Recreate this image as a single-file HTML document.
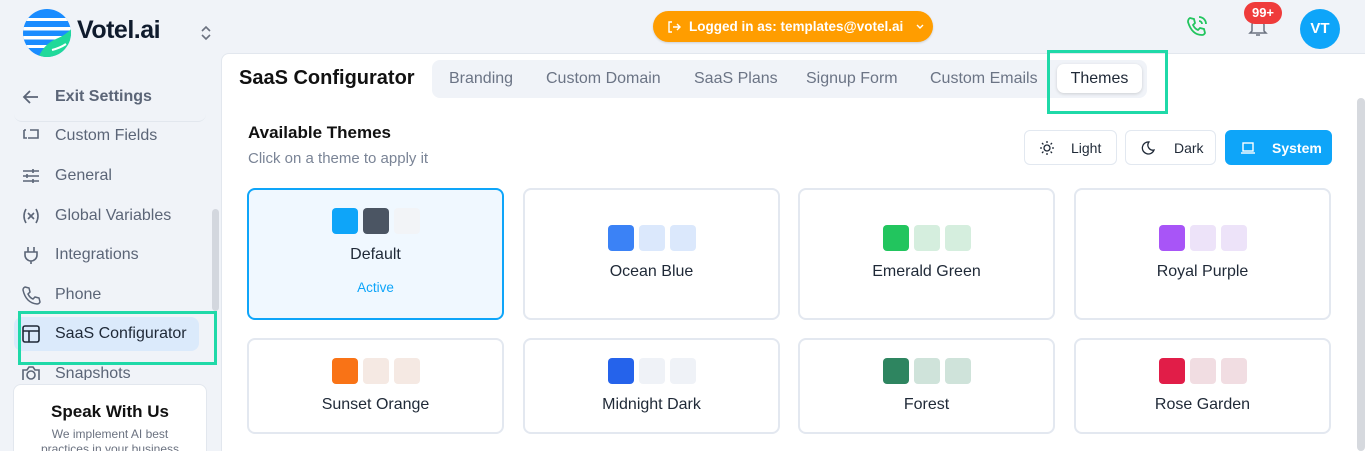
<!DOCTYPE html>
<html><head><meta charset="utf-8"><style>
*{box-sizing:border-box;margin:0;padding:0}
html,body{width:1365px;height:451px;overflow:hidden}
body{background:#f0f3f8;font-family:"Liberation Sans",sans-serif;position:relative;color:#1f2937}
.a{position:absolute}
.nav{position:absolute;left:21px;font-size:16px;color:#5b6577;display:flex;align-items:center;white-space:nowrap}
.nav svg{width:20px;height:20px;margin-right:14px;flex:none}
.card{position:absolute;width:257px;border:2px solid #e3e8f0;border-radius:8px;background:#fff;text-align:center;font-size:16px;color:#1f2937}
.sw{display:flex;justify-content:center;gap:5px;margin-bottom:12px}
.sw i{width:26px;height:26px;border-radius:4px;display:block}
.tab{position:absolute;top:70px;font-size:16px;color:#6b7485;white-space:nowrap}
.btn{position:absolute;top:130px;height:35px;border:1px solid #e2e8f0;border-radius:6px;background:#fff;font-size:14px;display:flex;align-items:center;color:#1f2937}
</style></head><body>
<svg class="a" style="left:22px;top:8px" width="50" height="50" viewBox="0 0 50 50">
<clipPath id="c"><circle cx="25" cy="25" r="24"/></clipPath>
<g clip-path="url(#c)"><rect width="50" height="50" fill="#1a8cff"/>
<rect x="0" y="10" width="50" height="3" fill="#fff"/><rect x="0" y="19" width="50" height="3.5" fill="#fff"/><rect x="0" y="28" width="50" height="3.5" fill="#fff"/><rect x="0" y="37" width="50" height="3" fill="#fff"/>
<path d="M16 50 Q22 36 34 31 Q44 27 50 20 L50 50Z" fill="#20d99a"/><path d="M30 42 Q38 40 44 36" stroke="#fff" stroke-width="2" fill="none"/></g></svg>
<div class="a" style="left:77px;top:16px;font-size:25px;font-weight:bold;color:#0f1b2d;letter-spacing:-0.5px">Votel.ai</div>
<svg class="a" style="left:200px;top:25px" width="12" height="16" viewBox="0 0 12 16"><path d="M2 6l4-4 4 4M2 10l4 4 4-4" fill="none" stroke="#6b7280" stroke-width="1.6"/></svg>
<div class="a" style="left:14px;top:74px;width:192px;height:48px;border-bottom:1px solid #e2e7ee;border-radius:0 0 8px 8px"></div>
<div class="nav" style="top:87px;color:#5b6577;font-weight:bold"><svg viewBox="0 0 20 20"><path d="M17 10H4M9 4l-6 6 6 6" fill="none" stroke="#5b6577" stroke-width="1.8"/></svg>Exit Settings</div>
<div class="nav" style="top:126px"><svg viewBox="0 0 20 20"><path d="M3 4v8h3M7 12h10V4H9M3 4h2" fill="none" stroke="#5b6577" stroke-width="1.6"/></svg>Custom Fields</div>
<div class="nav" style="top:166px"><svg viewBox="0 0 20 20"><path d="M2 5h16M2 10h16M2 15h16M12 3v4M6 8v4M12 13v4" fill="none" stroke="#5b6577" stroke-width="1.6"/></svg>General</div>
<div class="nav" style="top:206px"><svg viewBox="0 0 20 20"><path d="M5 3Q1 10 5 17M15 3Q19 10 15 17M7 7l6 6M13 7l-6 6" fill="none" stroke="#5b6577" stroke-width="1.6"/></svg>Global Variables</div>
<div class="nav" style="top:245px"><svg viewBox="0 0 20 20"><path d="M7 2v5M13 2v5M4 7h12v3a6 6 0 0 1-12 0zM10 16v3" fill="none" stroke="#5b6577" stroke-width="1.6"/></svg>Integrations</div>
<div class="nav" style="top:285px"><svg viewBox="0 0 20 20"><path d="M4 2l4 1 1 4-2 2q2 4 5 5l2-2 4 1 1 4q-1 2-3 2Q5 18 2 5q0-2 2-3z" fill="none" stroke="#5b6577" stroke-width="1.5"/></svg>Phone</div>
<div class="a" style="left:14px;top:317px;width:185px;height:34px;background:#dbeafb;border-radius:8px"></div>
<div class="nav" style="top:324px;color:#1f2937"><svg viewBox="0 0 20 20"><rect x="2" y="2" width="16" height="16" rx="2" fill="none" stroke="#1f2937" stroke-width="1.6"/><path d="M2 7h16M8 7v11" stroke="#1f2937" stroke-width="1.6"/></svg>SaaS Configurator</div>
<div class="a" style="left:21px;top:364px;height:16px;width:180px;overflow:hidden"><div class="nav" style="left:0;top:0"><svg viewBox="0 0 20 20"><circle cx="10" cy="11" r="4" fill="none" stroke="#5b6577" stroke-width="1.6"/><path d="M2 6h4l2-3h4l2 3h4v12H2z" fill="none" stroke="#5b6577" stroke-width="1.6"/></svg>Snapshots</div></div>
<div class="a" style="left:18px;top:311px;width:199px;height:54px;border:3px solid #1fd9a8"></div>
<div class="a" style="left:212px;top:209px;width:7px;height:102px;background:#d3d7de;border-radius:4px"></div>
<div class="a" style="left:13px;top:384px;width:194px;height:80px;background:#fff;border:1px solid #e2e7ee;border-radius:8px;text-align:center">
<div style="font-size:17px;font-weight:bold;margin-top:17px;color:#111">Speak With Us</div>
<div style="font-size:12px;color:#6b7280;margin-top:5px;line-height:15px">We implement AI best<br>practices in your business</div></div>
<div class="a" style="left:653px;top:11px;width:280px;height:31px;background:#ff9d00;border-radius:16px;color:#fff;font-size:13.5px;font-weight:bold;display:flex;align-items:center;padding-left:14px;white-space:nowrap;box-shadow:0 1px 2px rgba(0,0,0,.15)">
<svg width="14" height="14" viewBox="0 0 14 14" style="margin-right:8px;flex:none"><path d="M5 2H2v10h3M6 7h7M10 4l3 3-3 3" fill="none" stroke="#fff" stroke-width="1.4"/></svg>Logged in as: templates@votel.ai<svg width="10" height="8" viewBox="0 0 10 8" style="margin-left:12px;flex:none"><path d="M2 2l3 3 3-3" fill="none" stroke="#fff" stroke-width="1.4"/></svg></div>
<svg class="a" style="left:1186px;top:15px" width="22" height="22" viewBox="0 0 22 22"><path d="M4 3l4 1 1 4-2 2q2 4 5 5l2-2 4 1 1 4q-1 2-3 2Q6 20 2 7q0-3 2-4z" fill="none" stroke="#22c55e" stroke-width="1.8"/><path d="M13 2a7 7 0 0 1 7 7M13 6a3 3 0 0 1 3 3" fill="none" stroke="#22c55e" stroke-width="1.8"/></svg>
<svg class="a" style="left:1248px;top:15px" width="20" height="22" viewBox="0 0 20 22"><path d="M4 16V10a6 6 0 0 1 12 0v6l2 2H2zM8 20h4" fill="none" stroke="#6b7280" stroke-width="1.5"/></svg>
<div class="a" style="left:1244px;top:2px;width:38px;height:22px;background:#ef3b3b;border-radius:11px;color:#fff;font-size:13px;font-weight:bold;text-align:center;line-height:22px">99+</div>
<div class="a" style="left:1300px;top:9px;width:40px;height:40px;background:#0ea5f9;border-radius:50%;color:#fff;font-size:15px;font-weight:bold;text-align:center;line-height:40px">VT</div>
<div class="a" style="left:221px;top:53px;width:1144px;height:398px;background:#fff;border-top-left-radius:8px;border-top:1px solid #e2e7ee;border-left:1px solid #e2e7ee"></div>
<div class="a" style="left:1357px;top:98px;width:8px;height:353px;background:#d6d9de;border-radius:4px"></div>
<div class="a" style="left:239px;top:67px;font-size:20px;font-weight:bold;color:#111">SaaS Configurator</div>
<div class="a" style="left:432px;top:60px;width:715px;height:38px;background:#f0f3f8;border-radius:8px"></div>
<div class="tab" style="left:449px">Branding</div>
<div class="tab" style="left:546px">Custom Domain</div>
<div class="tab" style="left:694px">SaaS Plans</div>
<div class="tab" style="left:806px">Signup Form</div>
<div class="tab" style="left:930px">Custom Emails</div>
<div class="a" style="left:1057px;top:64px;width:85px;height:29px;background:#fff;border-radius:7px;box-shadow:0 1px 3px rgba(0,0,0,.15);font-size:16px;color:#1f2937;text-align:center;line-height:29px">Themes</div>
<div class="a" style="left:1047px;top:50px;width:121px;height:64px;border:3px solid #1fd9a8"></div>
<div class="a" style="left:248px;top:123px;font-size:17px;font-weight:bold;color:#111">Available Themes</div>
<div class="a" style="left:248px;top:150px;font-size:15px;color:#7a8496">Click on a theme to apply it</div>
<div class="btn" style="left:1024px;width:93px"><svg width="16" height="16" viewBox="0 0 16 16" style="margin:0 16px 0 14px"><circle cx="8" cy="8" r="3" fill="none" stroke="#1f2937" stroke-width="1.3"/><path d="M8 1v2M8 13v2M1 8h2M13 8h2M3 3l1.4 1.4M11.6 11.6L13 13M3 13l1.4-1.4M11.6 4.4L13 3" stroke="#1f2937" stroke-width="1.3"/></svg>Light</div>
<div class="btn" style="left:1125px;width:91px"><svg width="16" height="16" viewBox="0 0 16 16" style="margin:0 18px 0 14px"><path d="M9 2a6 6 0 1 0 5 8 5 5 0 0 1-5-8z" fill="none" stroke="#1f2937" stroke-width="1.3"/></svg>Dark</div>
<div class="btn" style="left:1225px;width:107px;background:#0ea5f9;border-color:#0ea5f9;color:#fff;font-weight:bold"><svg width="16" height="14" viewBox="0 0 16 14" style="margin:0 16px 0 14px"><rect x="3" y="2" width="10" height="8" fill="none" stroke="#fff" stroke-width="1.4"/><path d="M1 12h14" stroke="#fff" stroke-width="1.4"/></svg>System</div>
<div class="card" style="left:247px;top:188px;height:132px;border-color:#0ea5f9;background:#f0f8ff;padding-top:18px"><div class="sw"><i style="background:#0ea5f9"></i><i style="background:#4b5563"></i><i style="background:#f2f4f7"></i></div>Default<div style="color:#0ea5f9;font-size:13.5px;margin-top:16px">Active</div></div>
<div class="card" style="left:523px;top:188px;height:132px;padding-top:35px"><div class="sw"><i style="background:#3b82f6"></i><i style="background:#dbe8fc"></i><i style="background:#dbe8fc"></i></div>Ocean Blue</div>
<div class="card" style="left:798px;top:188px;height:132px;padding-top:35px"><div class="sw"><i style="background:#22c55e"></i><i style="background:#d5eede"></i><i style="background:#d5eede"></i></div>Emerald Green</div>
<div class="card" style="left:1074px;top:188px;height:132px;padding-top:35px"><div class="sw"><i style="background:#a855f7"></i><i style="background:#ede3f9"></i><i style="background:#ede3f9"></i></div>Royal Purple</div>
<div class="card" style="left:247px;top:338px;height:96px;padding-top:18px"><div class="sw"><i style="background:#f97316"></i><i style="background:#f5e9e3"></i><i style="background:#f5e9e3"></i></div>Sunset Orange</div>
<div class="card" style="left:523px;top:338px;height:96px;padding-top:18px"><div class="sw"><i style="background:#2563eb"></i><i style="background:#eff2f7"></i><i style="background:#eff2f7"></i></div>Midnight Dark</div>
<div class="card" style="left:798px;top:338px;height:96px;padding-top:18px"><div class="sw"><i style="background:#2e8560"></i><i style="background:#cfe3da"></i><i style="background:#cfe3da"></i></div>Forest</div>
<div class="card" style="left:1074px;top:338px;height:96px;padding-top:18px"><div class="sw"><i style="background:#e11d48"></i><i style="background:#f1dde2"></i><i style="background:#f1dde2"></i></div>Rose Garden</div>
</body></html>
